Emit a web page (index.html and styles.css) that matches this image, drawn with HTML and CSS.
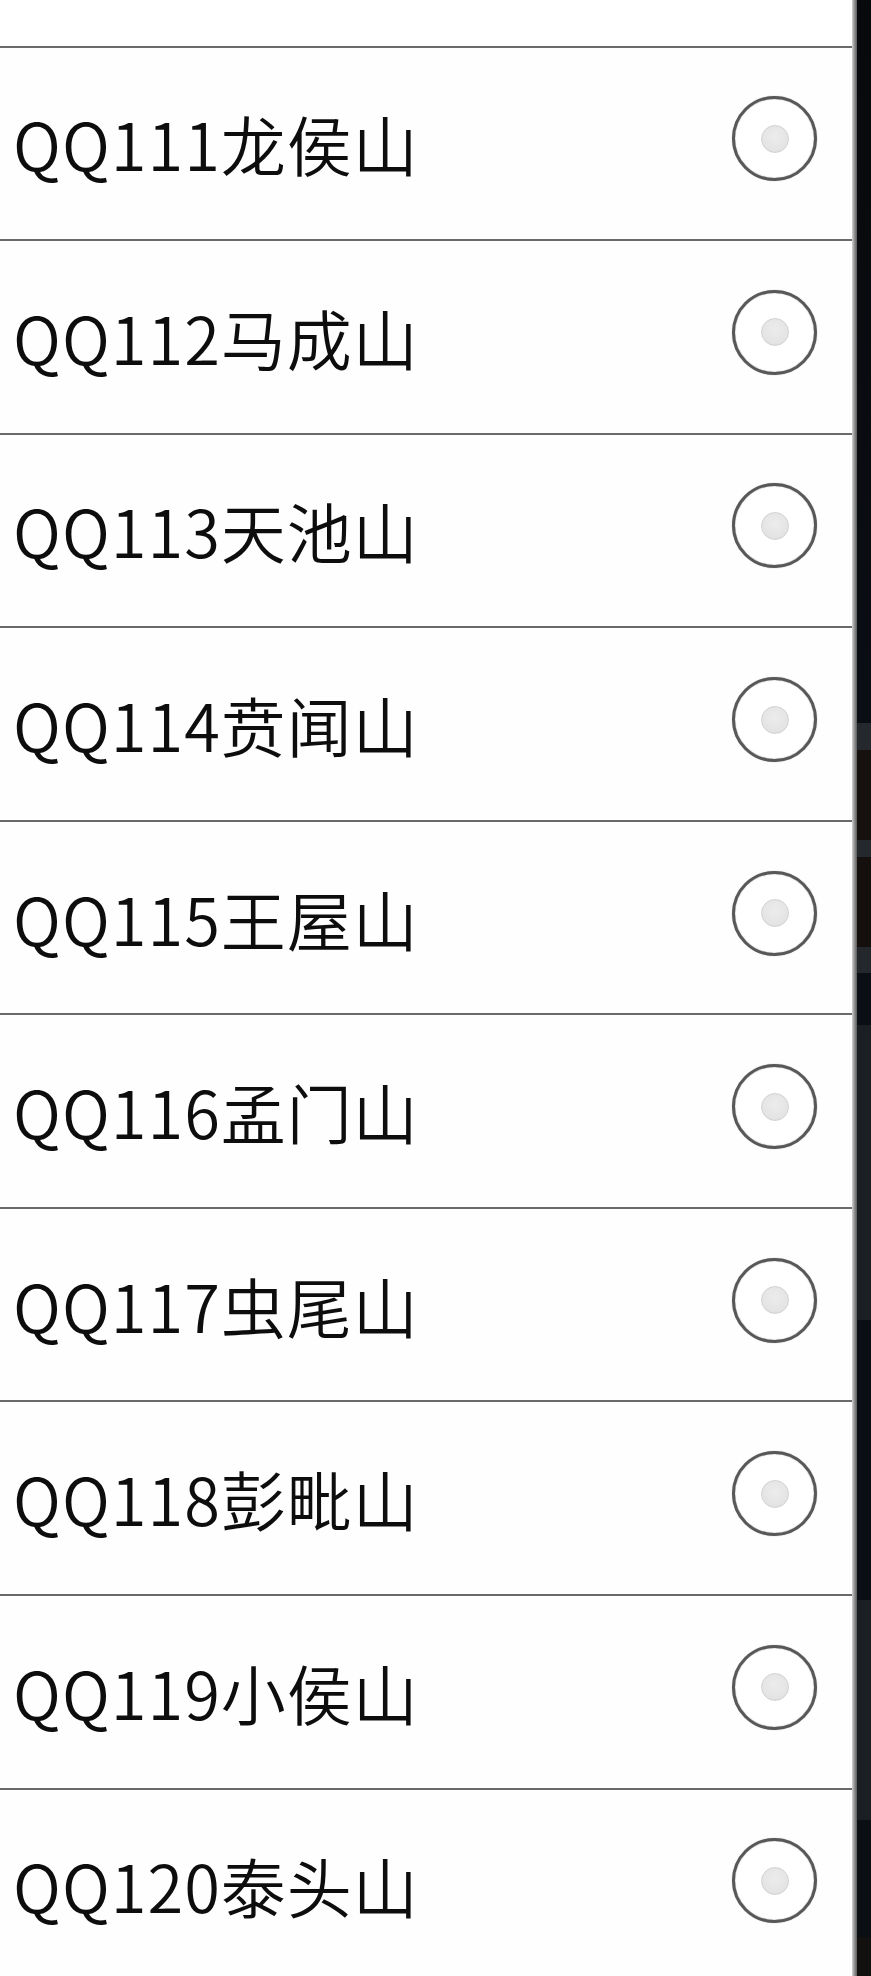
FILE: index.html
```html
<!DOCTYPE html>
<html lang="zh-CN">
<head>
<meta charset="utf-8">
<title>选择服务器</title>
<link rel="stylesheet" href="styles.css">
</head>
<body>
<div class="screen">
  <div class="panel">
    <ul class="list">
      <li class="row"><span class="label">QQ111龙侯山</span><span class="radio"><span class="dot"></span></span></li>
      <li class="row"><span class="label">QQ112马成山</span><span class="radio"><span class="dot"></span></span></li>
      <li class="row"><span class="label">QQ113天池山</span><span class="radio"><span class="dot"></span></span></li>
      <li class="row"><span class="label">QQ114贲闻山</span><span class="radio"><span class="dot"></span></span></li>
      <li class="row"><span class="label">QQ115王屋山</span><span class="radio"><span class="dot"></span></span></li>
      <li class="row"><span class="label">QQ116孟门山</span><span class="radio"><span class="dot"></span></span></li>
      <li class="row"><span class="label">QQ117虫尾山</span><span class="radio"><span class="dot"></span></span></li>
      <li class="row"><span class="label">QQ118彭毗山</span><span class="radio"><span class="dot"></span></span></li>
      <li class="row"><span class="label">QQ119小侯山</span><span class="radio"><span class="dot"></span></span></li>
      <li class="row"><span class="label">QQ120泰头山</span><span class="radio"><span class="dot"></span></span></li>
    </ul>
  </div>
  <div class="edge"></div>
  <div class="backdrop"></div>
</div>
</body>
</html>
```
FILE: styles.css
```css
html, body {
  margin: 0;
  padding: 0;
  height: 100%;
  overflow: hidden;
}

body {
  background: #0a0c10;
  font-family: "Noto Sans CJK SC", "Noto Sans", sans-serif;
}

.screen {
  display: flex;
  width: 871px;
  height: 1976px;
  overflow: hidden;
}

.panel {
  width: 852px;
  flex: none;
  background: #ffffff;
  overflow: hidden;
  padding-top: 45.6px;
  box-sizing: border-box;
}

.list {
  list-style: none;
  margin: 0;
  padding: 0;
  border-top: 2px solid #6a6a6a;
}

.row {
  box-sizing: border-box;
  height: 193.56px;
  border-bottom: 2px solid #6a6a6a;
  background: #fefefe;
  display: flex;
  align-items: center;
  justify-content: space-between;
  padding: 0 35px 0 13px;
}

.label {
  font-size: 65px;
  line-height: 64px;
  font-weight: 350;
  letter-spacing: 1px;
  color: #0d0d0d;
  white-space: nowrap;
}

.radio {
  box-sizing: border-box;
  width: 85px;
  height: 85px;
  margin-bottom: 9px;
  border-radius: 50%;
  border: 3.5px solid #585858;
  box-shadow: 0 0 1px rgba(60, 60, 60, 0.6), inset 0 0 1px rgba(60, 60, 60, 0.6);
  background: #ffffff;
  display: flex;
  align-items: center;
  justify-content: center;
  flex: none;
}

.dot {
  box-sizing: border-box;
  width: 28px;
  height: 28px;
  border-radius: 50%;
  border: 1px solid #d2d2d2;
  background: radial-gradient(circle at 50% 40%, #ececec 0%, #e4e4e4 65%, #d8d8d8 100%);
}

.edge {
  width: 5px;
  flex: none;
  background: linear-gradient(to right, #d4d4d4 0%, #9c9c9c 40%, #5c5c5c 100%);
}

.backdrop {
  flex: 1;
  background: linear-gradient(to bottom,
    #08090c 0px,
    #0a0d13 680px,
    #0a0d13 723px,
    #25282d 723px,
    #25282d 750px,
    #16110e 750px,
    #16110e 840px,
    #25282d 840px,
    #25282d 857px,
    #15100d 857px,
    #15100d 947px,
    #24272c 947px,
    #24272c 973px,
    #0b0e14 973px,
    #0b0e14 1025px,
    #1b1e22 1025px,
    #1b1e22 1320px,
    #0a0d13 1320px,
    #0a0d13 1600px,
    #1b1e22 1600px,
    #1b1e22 1820px,
    #0b0e13 1820px,
    #0b0e13 1937px,
    #121110 1937px);
}
```
